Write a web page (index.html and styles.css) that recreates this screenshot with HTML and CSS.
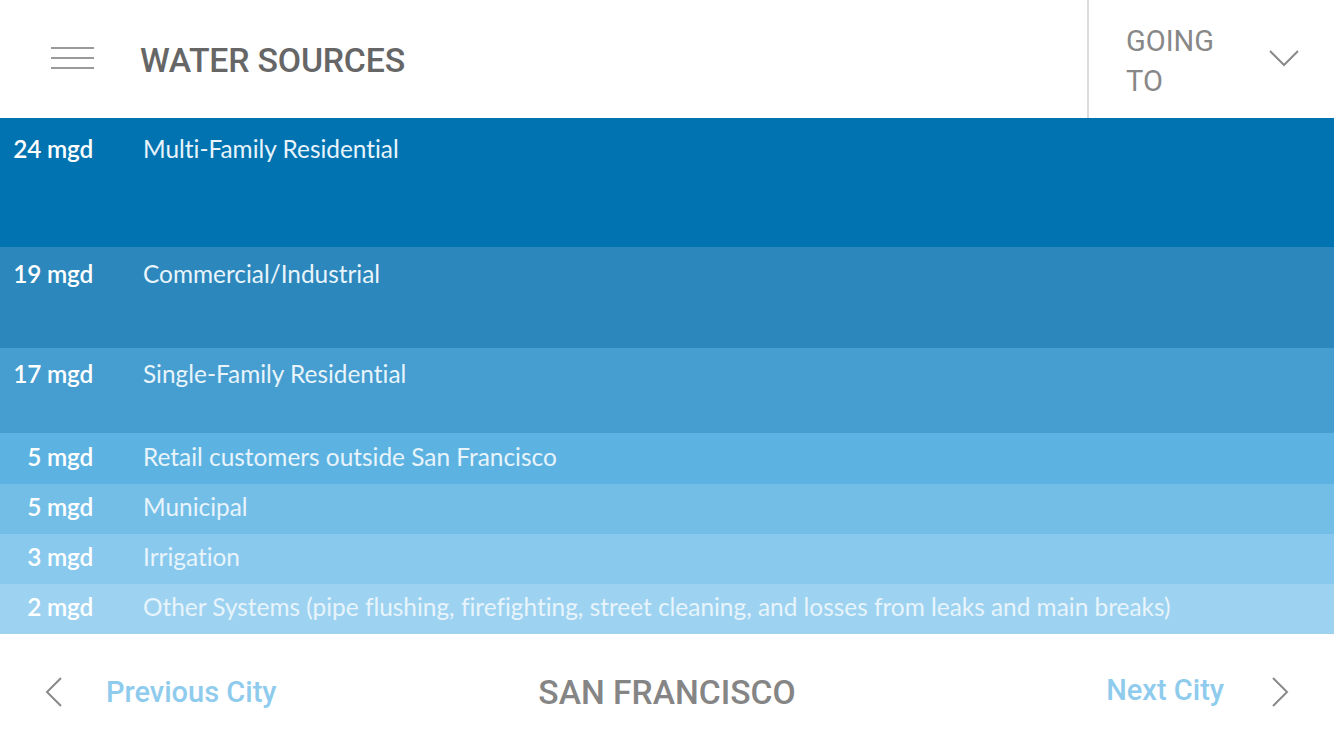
FILE: index.html
```html
<!DOCTYPE html>
<html lang="en">
<head>
<meta charset="utf-8">
<title>Water Sources</title>
<link rel="stylesheet" href="styles.css">
</head>
<body>
<div class="page">
  <header class="header">
    <div class="header-main">
      <button class="menu" aria-label="Menu">
        <svg width="44" height="24" viewBox="0 0 44 24"><g stroke="#9a9a9a" stroke-width="2"><line x1="0" y1="2" x2="43" y2="2"/><line x1="0" y1="12" x2="43" y2="12"/><line x1="0" y1="22" x2="43" y2="22"/></g></svg>
      </button>
      <h1 class="title">WATER SOURCES</h1>
    </div>
    <div class="going">
      <span class="going-text">GOING<br>TO</span>
      <svg class="going-chev" width="30" height="18" viewBox="0 0 30 18"><polyline points="1,2 15,16 29,2" fill="none" stroke="#8a8a8a" stroke-width="2"/></svg>
    </div>
  </header>
  <main class="rows">
    <div class="row row-1"><span class="amt">24 mgd</span><span class="lbl">Multi-Family Residential</span></div>
    <div class="row row-2"><span class="amt">19 mgd</span><span class="lbl">Commercial/Industrial</span></div>
    <div class="row row-3"><span class="amt">17 mgd</span><span class="lbl">Single-Family Residential</span></div>
    <div class="row row-4"><span class="amt">5 mgd</span><span class="lbl">Retail customers outside San Francisco</span></div>
    <div class="row row-5"><span class="amt">5 mgd</span><span class="lbl">Municipal</span></div>
    <div class="row row-6"><span class="amt">3 mgd</span><span class="lbl">Irrigation</span></div>
    <div class="row row-7"><span class="amt">2 mgd</span><span class="lbl">Other Systems (pipe flushing, firefighting, street cleaning, and losses from leaks and main breaks)</span></div>
  </main>
  <footer class="footer">
    <div class="nav nav-prev">
      <svg class="chev" width="20" height="30" viewBox="0 0 20 30"><polyline points="17,1 3,15 17,29" fill="none" stroke="#8a8a8a" stroke-width="2"/></svg>
      <span class="nav-text">Previous City</span>
    </div>
    <div class="city">SAN FRANCISCO</div>
    <div class="nav nav-next">
      <span class="nav-text">Next City</span>
      <svg class="chev" width="20" height="30" viewBox="0 0 20 30"><polyline points="3,1 17,15 3,29" fill="none" stroke="#8a8a8a" stroke-width="2"/></svg>
    </div>
  </footer>
</div>
</body>
</html>
```
FILE: styles.css
```css
* { box-sizing: border-box; }
html, body { margin: 0; padding: 0; background: #fff; }
.page {
  width: 1334px;
  height: 750px;
  display: flex;
  flex-direction: column;
  overflow: hidden;
}
.header {
  height: 118px;
  display: flex;
  flex: none;
}
.header-main {
  flex: 1;
  display: flex;
  align-items: center;
  padding-left: 51px;
}
.menu {
  border: 0;
  background: none;
  padding: 0;
  margin: 0;
  width: 44px;
  height: 24px;
  display: block;
  margin-top: -2px;
}
.menu svg { display: block; }
.title {
  margin: 2px 0 0 45px;
  font-family: Roboto, "Liberation Sans", sans-serif;
  font-weight: 500;
  font-size: 33.8px;
  letter-spacing: -0.2px;
  color: #666;
}
.going {
  width: 247px;
  border-left: 2px solid #dcdcdc;
  display: flex;
  align-items: center;
  padding-left: 37px;
}
.going-text {
  font-family: Roboto, "Liberation Sans", sans-serif;
  font-size: 29px;
  line-height: 40px;
  color: #888;
  width: 131px;
  margin-top: 3px;
}
.going-chev { margin-left: 12px; margin-top: -3px; }
.rows {
  display: flex;
  flex-direction: column;
  flex: none;
}
.row {
  display: flex;
  font-family: Lato, "Noto Sans", sans-serif;
  font-size: 24.4px;
  line-height: 28px;
  padding-top: 10px;
  height: 50px;
  font-variant-ligatures: none;
}
.amt {
  width: 93px;
  text-align: right;
  color: #fff;
  font-weight: 600;
  flex: none;
  letter-spacing: -0.2px;
}
.lbl {
  margin-left: 50px;
  color: #e8f4fb;
  white-space: nowrap;
}
.row-1 { height: 129px; background: #0173b1; padding-top: 17px; }
.row-2 { height: 101px; background: #2c87bc; padding-top: 13px; }
.row-3 { height: 85px; background: #459dd0; padding-top: 12px; }
.row-4 { height: 51px; background: #5cb2e1; padding-top: 10px; }
.row-5 { background: #73bee7; padding-top: 9px; }
.row-6 { background: #89c9ed; padding-top: 9px; }
.row-7 { background: #9dd3f1; padding-top: 9px; }
.footer {
  flex: 1;
  display: grid;
  grid-template-columns: 1fr auto 1fr;
  align-items: center;
  padding: 0 44px 0 44px;
}
.nav {
  display: flex;
  align-items: center;
}
.nav-next { justify-content: flex-end; }
.chev { display: block; }
.nav-text {
  font-family: Roboto, "Liberation Sans", sans-serif;
  font-size: 29px;
  color: #8ecbed;
  font-weight: 500;
}
.nav-prev .nav-text { margin-left: 42px; }
.nav-next .nav-text { margin-right: 46px; margin-top: -4px; }
.city {
  font-family: Roboto, "Liberation Sans", sans-serif;
  font-size: 33.6px;
  font-weight: 500;
  color: #858585;
}
```
